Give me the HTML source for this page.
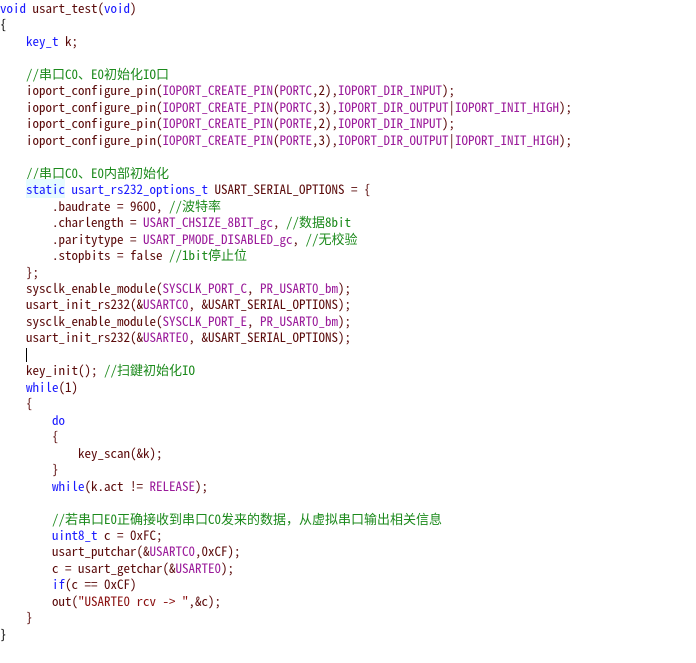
<!DOCTYPE html>
<html><head><meta charset="utf-8"><style>
html,body{margin:0;padding:0;background:#fff;width:696px;height:663px;overflow:hidden}
#code{position:absolute;left:0;top:0px;font-family:"WenQuanYi Zen Hei Mono","Noto Sans Mono CJK SC","Liberation Mono","DejaVu Sans Mono",monospace;font-size:13px;letter-spacing:0;color:#5a0a0a}
#code div{white-space:pre;height:16.47px;line-height:16px;overflow:visible}
.k{color:#1a1aff}
.m{color:#9a1a9a}
.c{color:#1c8a1c}
.s{color:#8a1010}
.z{}
.hl{background:#e6fbff}
.cur{display:inline-block;width:1px;height:14px;background:#000;vertical-align:-3px}
.b{color:#000}
</style></head><body><div id="code">
<div><span class="k">void</span> usart_test(<span class="k">void</span>)</div>
<div><span class="b">{</span></div>
<div>    <span class="k">key_t</span> k;</div>
<div> </div>
<div>    <span class="c">//<span class="z">串口</span>C0<span class="z">、</span>E0<span class="z">初始化</span>IO<span class="z">口</span></span></div>
<div>    ioport_configure_pin(<span class="m">IOPORT_CREATE_PIN</span>(<span class="m">PORTC</span>,2),<span class="m">IOPORT_DIR_INPUT</span>);</div>
<div>    ioport_configure_pin(<span class="m">IOPORT_CREATE_PIN</span>(<span class="m">PORTC</span>,3),<span class="m">IOPORT_DIR_OUTPUT</span>|<span class="m">IOPORT_INIT_HIGH</span>);</div>
<div>    ioport_configure_pin(<span class="m">IOPORT_CREATE_PIN</span>(<span class="m">PORTE</span>,2),<span class="m">IOPORT_DIR_INPUT</span>);</div>
<div>    ioport_configure_pin(<span class="m">IOPORT_CREATE_PIN</span>(<span class="m">PORTE</span>,3),<span class="m">IOPORT_DIR_OUTPUT</span>|<span class="m">IOPORT_INIT_HIGH</span>);</div>
<div> </div>
<div>    <span class="c">//<span class="z">串口</span>C0<span class="z">、</span>E0<span class="z">内部初始化</span></span></div>
<div>    <span class="k hl">static</span> <span class="k">usart_rs232_options_t</span> USART_SERIAL_OPTIONS = {</div>
<div>        .baudrate = 9600, <span class="c">//<span class="z">波特率</span></span></div>
<div>        .charlength = <span class="m">USART_CHSIZE_8BIT_gc</span>, <span class="c">//<span class="z">数据</span>8bit</span></div>
<div>        .paritytype = <span class="m">USART_PMODE_DISABLED_gc</span>, <span class="c">//<span class="z">无校验</span></span></div>
<div>        .stopbits = false <span class="c">//1bit<span class="z">停止位</span></span></div>
<div>    };</div>
<div>    sysclk_enable_module(<span class="m">SYSCLK_PORT_C</span>, <span class="m">PR_USART0_bm</span>);</div>
<div>    usart_init_rs232(&amp;<span class="m">USARTC0</span>, &amp;USART_SERIAL_OPTIONS);</div>
<div>    sysclk_enable_module(<span class="m">SYSCLK_PORT_E</span>, <span class="m">PR_USART0_bm</span>);</div>
<div>    usart_init_rs232(&amp;<span class="m">USARTE0</span>, &amp;USART_SERIAL_OPTIONS);</div>
<div>    <span class="cur"></span></div>
<div>    key_init(); <span class="c">//<span class="z">扫鍵初始化</span>IO</span></div>
<div>    <span class="k">while</span>(1)</div>
<div>    {</div>
<div>        <span class="k">do</span></div>
<div>        {</div>
<div>            key_scan(&amp;k);</div>
<div>        }</div>
<div>        <span class="k">while</span>(k.act != <span class="m">RELEASE</span>);</div>
<div> </div>
<div>        <span class="c">//<span class="z">若串口</span>E0<span class="z">正确接收到串口</span>C0<span class="z">发来的数据，从虚拟串口输出相关信息</span></span></div>
<div>        <span class="k">uint8_t</span> c = 0xFC;</div>
<div>        usart_putchar(&amp;<span class="m">USARTC0</span>,0xCF);</div>
<div>        c = usart_getchar(&amp;<span class="m">USARTE0</span>);</div>
<div>        <span class="k">if</span>(c == 0xCF)</div>
<div>        out(<span class="s">"USARTE0 rcv -&gt; "</span>,&amp;c);</div>
<div>    }</div>
<div><span class="b">}</span></div>
</div></body></html>
